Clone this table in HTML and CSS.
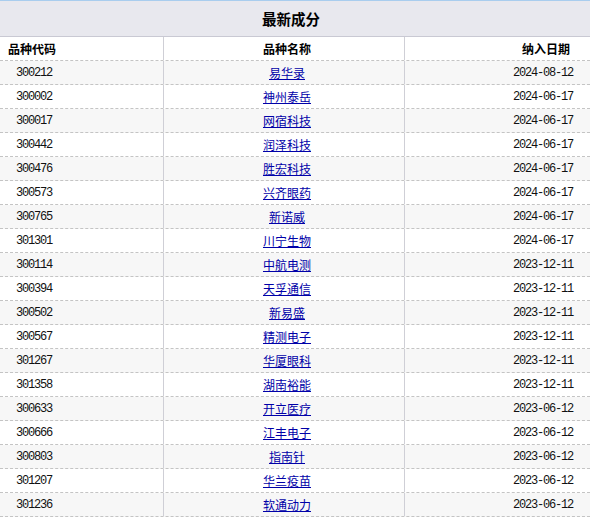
FILE: index.html
```html
<!DOCTYPE html>
<html lang="zh-CN">
<head>
<meta charset="utf-8">
<title>最新成分</title>
<link rel="stylesheet" href="styles.css">
</head>
<body>
<div class="panel">
  <div class="title">最新成分</div>
  <div class="row head">
    <div class="cell c1">品种代码</div>
    <div class="cell c2">品种名称</div>
    <div class="cell c3">纳入日期</div>
  </div>
  <div class="row odd"><div class="cell c1 num">300212</div><div class="cell c2"><a href="#">易华录</a></div><div class="cell c3 num">2024-08-12</div></div>
  <div class="row"><div class="cell c1 num">300002</div><div class="cell c2"><a href="#">神州泰岳</a></div><div class="cell c3 num">2024-06-17</div></div>
  <div class="row odd"><div class="cell c1 num">300017</div><div class="cell c2"><a href="#">网宿科技</a></div><div class="cell c3 num">2024-06-17</div></div>
  <div class="row"><div class="cell c1 num">300442</div><div class="cell c2"><a href="#">润泽科技</a></div><div class="cell c3 num">2024-06-17</div></div>
  <div class="row odd"><div class="cell c1 num">300476</div><div class="cell c2"><a href="#">胜宏科技</a></div><div class="cell c3 num">2024-06-17</div></div>
  <div class="row"><div class="cell c1 num">300573</div><div class="cell c2"><a href="#">兴齐眼药</a></div><div class="cell c3 num">2024-06-17</div></div>
  <div class="row odd"><div class="cell c1 num">300765</div><div class="cell c2"><a href="#">新诺威</a></div><div class="cell c3 num">2024-06-17</div></div>
  <div class="row"><div class="cell c1 num">301301</div><div class="cell c2"><a href="#">川宁生物</a></div><div class="cell c3 num">2024-06-17</div></div>
  <div class="row odd"><div class="cell c1 num">300114</div><div class="cell c2"><a href="#">中航电测</a></div><div class="cell c3 num">2023-12-11</div></div>
  <div class="row"><div class="cell c1 num">300394</div><div class="cell c2"><a href="#">天孚通信</a></div><div class="cell c3 num">2023-12-11</div></div>
  <div class="row odd"><div class="cell c1 num">300502</div><div class="cell c2"><a href="#">新易盛</a></div><div class="cell c3 num">2023-12-11</div></div>
  <div class="row"><div class="cell c1 num">300567</div><div class="cell c2"><a href="#">精测电子</a></div><div class="cell c3 num">2023-12-11</div></div>
  <div class="row odd"><div class="cell c1 num">301267</div><div class="cell c2"><a href="#">华厦眼科</a></div><div class="cell c3 num">2023-12-11</div></div>
  <div class="row"><div class="cell c1 num">301358</div><div class="cell c2"><a href="#">湖南裕能</a></div><div class="cell c3 num">2023-12-11</div></div>
  <div class="row odd"><div class="cell c1 num">300633</div><div class="cell c2"><a href="#">开立医疗</a></div><div class="cell c3 num">2023-06-12</div></div>
  <div class="row"><div class="cell c1 num">300666</div><div class="cell c2"><a href="#">江丰电子</a></div><div class="cell c3 num">2023-06-12</div></div>
  <div class="row odd"><div class="cell c1 num">300803</div><div class="cell c2"><a href="#">指南针</a></div><div class="cell c3 num">2023-06-12</div></div>
  <div class="row"><div class="cell c1 num">301207</div><div class="cell c2"><a href="#">华兰疫苗</a></div><div class="cell c3 num">2023-06-12</div></div>
  <div class="row odd"><div class="cell c1 num">301236</div><div class="cell c2"><a href="#">软通动力</a></div><div class="cell c3 num">2023-06-12</div></div>
</div>
</body>
</html>
```

FILE: styles.css
```css
html, body {
  margin: 0;
  padding: 0;
  background: #ffffff;
}
body {
  font-family: "Noto Sans CJK SC", "Liberation Sans", sans-serif;
  font-size: 12px;
  color: #000000;
}
.panel {
  width: 590px;
}
.title {
  height: 35px;
  line-height: 35px;
  border-top: 1px solid #a9cdee;
  border-bottom: 1px solid #c9c9d3;
  background: #e8e8ee;
  text-align: center;
  font-weight: bold;
  font-size: 14.5px;
  padding-right: 8px;
}
.row {
  display: grid;
  grid-template-columns: 164px 241px 1fr;
  height: 23px;
  border-bottom: 1px dashed #c4c4c4;
  background: #ffffff;
}
.row.odd {
  background: #f7f7f7;
}
.cell {
  line-height: 23px;
  white-space: nowrap;
  overflow: hidden;
}
.c1, .c2 {
  border-right: 1px solid #cfcfd6;
}
.c1 {
  padding-left: 16px;
}
.c2 {
  text-align: center;
  padding-left: 6px;
}
.c3 {
  text-align: right;
  padding-right: 17px;
}
.head .cell {
  font-weight: bold;
}
.head .c1 {
  padding-left: 8px;
}
.head .c3 {
  padding-right: 20px;
}
.num {
  font-family: "Liberation Mono", monospace;
  letter-spacing: -1.2px;
  line-height: 25px;
  color: #111111;
}
a {
  color: #0000a8;
  text-decoration: underline;
}
```
